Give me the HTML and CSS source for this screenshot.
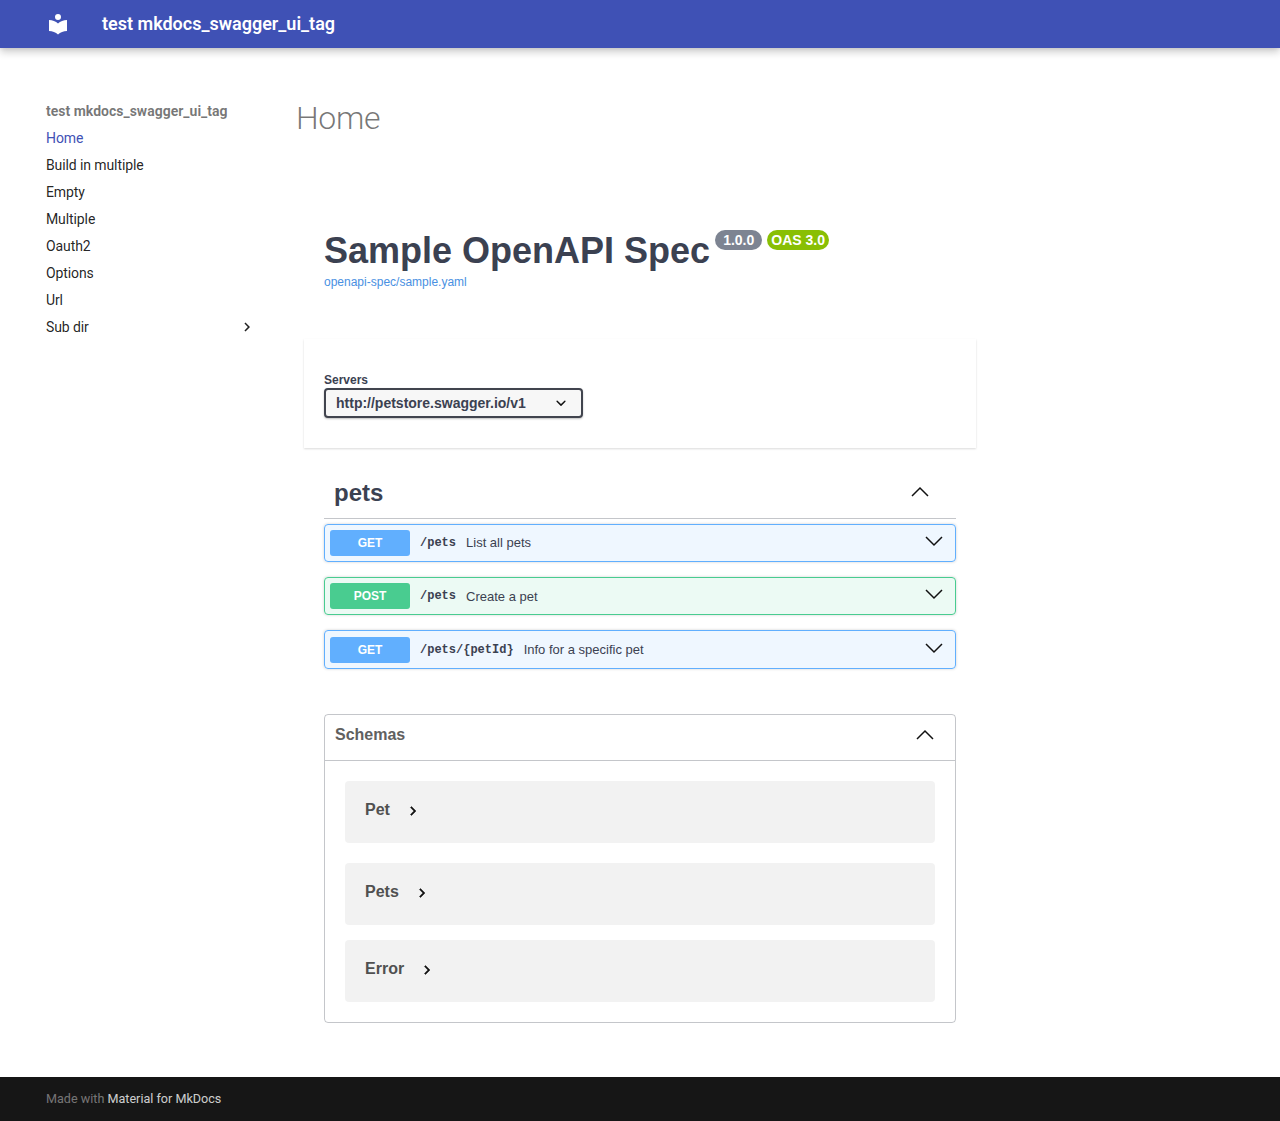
FILE: index.html
```html
<!DOCTYPE html>
<html lang="en">
  <head>
    <meta charset="UTF-8" />
    <meta name="viewport" content="width=device-width, initial-scale=1.0" />
    <title>test mkdocs_swagger_ui_tag</title>
    <link rel="stylesheet" href="styles.css">
  </head>
  <body>
    <header class="topbar">
      <svg class="logo" viewBox="0 0 24 24" width="24" height="24">
        <path d="M12 8a3 3 0 0 0 3-3 3 3 0 0 0-3-3 3 3 0 0 0-3 3 3 3 0 0 0 3 3m0 3.54C9.64 9.35 6.5 8 3 8v11c3.5 0 6.64 1.35 9 3.54 2.36-2.19 5.5-3.54 9-3.54V8c-3.5 0-6.64 1.35-9 3.54Z" />
      </svg>
      <span class="topbar-title">test mkdocs_swagger_ui_tag</span>
    </header>

    <div class="page">
      <nav class="sidebar">
        <div class="sidebar-title">test mkdocs_swagger_ui_tag</div>
        <a class="nav-item active">Home</a>
        <a class="nav-item">Build in multiple</a>
        <a class="nav-item">Empty</a>
        <a class="nav-item">Multiple</a>
        <a class="nav-item">Oauth2</a>
        <a class="nav-item">Options</a>
        <a class="nav-item">Url</a>
        <a class="nav-item nav-parent">
          Sub dir
          <svg viewBox="0 0 24 24" width="18" height="18"><path d="M8.59 16.58 13.17 12 8.59 7.41 10 6l6 6-6 6-1.41-1.42Z" /></svg>
        </a>
      </nav>

      <main class="content">
        <h1 class="page-title">Home</h1>

        <div class="swagger">
          <div class="info">
            <h2 class="api-title">
              Sample OpenAPI Spec
              <span class="badges">
                <span class="badge badge-version">1.0.0</span>
                <span class="badge badge-oas">OAS 3.0</span>
              </span>
            </h2>
            <a class="spec-link">openapi-spec/sample.yaml</a>
          </div>

          <div class="scheme-box">
            <div class="servers-label">Servers</div>
            <div class="server-select">
              http://petstore.swagger.io/v1
              <svg viewBox="0 0 20 20" width="20" height="20"><path d="M13.418 7.859a.695.695 0 0 1 .978 0 .68.68 0 0 1 0 .969l-3.908 3.83a.697.697 0 0 1-.979 0l-3.908-3.83a.68.68 0 0 1 0-.969.695.695 0 0 1 .978 0L10 11l3.418-3.141z" /></svg>
            </div>
          </div>

          <section class="tag-section">
            <div class="tag-head">
              <h3>pets</h3>
              <svg class="arrow" viewBox="0 0 20 20" width="20" height="20"><path d="M2 14 10 6l8 8" /></svg>
            </div>

            <div class="op op-get op-first">
              <span class="method">GET</span>
              <span class="op-path">/pets</span>
              <span class="op-desc">List all pets</span>
              <svg class="arrow" viewBox="0 0 20 20" width="20" height="20"><path d="M2 6l8 8 8-8" /></svg>
            </div>
            <div class="op op-post">
              <span class="method">POST</span>
              <span class="op-path">/pets</span>
              <span class="op-desc">Create a pet</span>
              <svg class="arrow" viewBox="0 0 20 20" width="20" height="20"><path d="M2 6l8 8 8-8" /></svg>
            </div>
            <div class="op op-get op-tall">
              <span class="method">GET</span>
              <span class="op-path">/pets/{petId}</span>
              <span class="op-desc">Info for a specific pet</span>
              <svg class="arrow" viewBox="0 0 20 20" width="20" height="20"><path d="M2 6l8 8 8-8" /></svg>
            </div>
          </section>

          <section class="schemas">
            <div class="schemas-head">
              <h4>Schemas</h4>
              <svg class="arrow" viewBox="0 0 20 20" width="20" height="20"><path d="M2 14 10 6l8 8" /></svg>
            </div>
            <div class="schemas-body">
              <div class="model">Pet <svg viewBox="0 0 24 24" width="18" height="18"><path d="M8.59 16.58 13.17 12 8.59 7.41 10 6l6 6-6 6-1.41-1.42Z" /></svg></div>
              <div class="model model-wide">Pets <svg viewBox="0 0 24 24" width="18" height="18"><path d="M8.59 16.58 13.17 12 8.59 7.41 10 6l6 6-6 6-1.41-1.42Z" /></svg></div>
              <div class="model">Error <svg viewBox="0 0 24 24" width="18" height="18"><path d="M8.59 16.58 13.17 12 8.59 7.41 10 6l6 6-6 6-1.41-1.42Z" /></svg></div>
            </div>
          </section>
        </div>
      </main>
    </div>

    <footer class="footer">
      <span class="footer-text">Made with <a>Material for MkDocs</a></span>
    </footer>
  </body>
</html>
```

FILE: styles.css
```css
* {
  box-sizing: border-box;
}
body {
  margin: 0;
  min-height: 1121px;
  display: flex;
  flex-direction: column;
  font-family: Roboto, sans-serif;
  background-color: #fff;
  color: rgba(0, 0, 0, 0.87);
}

/* top bar */
.topbar {
  height: 48px;
  display: flex;
  align-items: center;
  gap: 32px;
  padding-left: 46px;
  background-color: #3f51b5;
  color: #fff;
  box-shadow: 0 0 4px rgba(0, 0, 0, 0.1), 0 4px 8px rgba(0, 0, 0, 0.2);
}
.logo {
  fill: #fff;
}
.topbar-title {
  margin-top: -2px;
  font-size: 18px;
  font-weight: 600;
}

/* layout */
.page {
  flex: 1;
  display: flex;
}
.sidebar {
  width: 296px;
  flex: none;
  padding: 54px 40px 0 46px;
  font-size: 14px;
}
.sidebar-title {
  height: 18px;
  line-height: 18px;
  margin-bottom: 9px;
  font-weight: 700;
  color: rgba(0, 0, 0, 0.54);
}
.nav-item {
  display: flex;
  justify-content: space-between;
  align-items: center;
  height: 18px;
  line-height: 18px;
  margin-bottom: 9px;
  letter-spacing: -0.1px;
}
.nav-item.active {
  color: #3f51b5;
}
.nav-parent svg {
  fill: rgba(0, 0, 0, 0.87);
}

.content {
  width: 688px;
}
.page-title {
  margin: 50px 0 0;
  height: 40px;
  line-height: 40px;
  font-size: 32px;
  font-weight: 300;
  letter-spacing: -0.32px;
  color: rgba(0, 0, 0, 0.54);
}

/* swagger */
.swagger {
  width: 672px;
  margin-left: 8px;
  font-family: "Liberation Sans", sans-serif;
  color: #3b4151;
}
.info {
  padding: 0 20px;
  margin-top: 92px;
  height: 109px;
}
.api-title {
  margin: 0;
  font-size: 36px;
  line-height: 41px;
  font-weight: 700;
  display: flex;
  align-items: flex-start;
  gap: 5px;
  height: 41px;
}
.badges {
  display: flex;
  gap: 5px;
}
.badge {
  height: 20px;
  padding: 0 4px;
  border-radius: 57px;
  font-size: 14px;
  line-height: 20px;
  color: #fff;
}
.badge-version {
  padding: 0 8px;
  background-color: #7d8492;
}
.badge-oas {
  background-color: #89bf04;
}
.spec-link {
  display: block;
  font-size: 12px;
  line-height: 14px;
  margin-top: 4px;
  color: #4990e2;
}

.scheme-box {
  height: 109px;
  padding: 34px 20px 0;
  background-color: #fff;
  box-shadow: 0 1px 2px rgba(0, 0, 0, 0.15);
}
.servers-label {
  height: 15px;
  font-size: 12px;
  line-height: 15px;
  font-weight: 700;
}
.server-select {
  width: 259px;
  height: 30px;
  display: flex;
  justify-content: space-between;
  align-items: center;
  padding: 0 10px;
  border: 2px solid #41444e;
  border-radius: 4px;
  background-color: #f7f7f7;
  box-shadow: 0 1px 2px rgba(0, 0, 0, 0.25);
  font-size: 14px;
  font-weight: 700;
}
.server-select svg {
  fill: #111;
}

.arrow {
  flex: none;
  fill: none;
  stroke: #111;
  stroke-width: 1.5;
}
.tag-section {
  padding: 0 20px;
  margin-top: 22px;
}
.tag-head {
  height: 49px;
  display: flex;
  justify-content: space-between;
  align-items: center;
  padding: 0 26px 0 10px;
  border-bottom: 1px solid rgba(59, 65, 81, 0.3);
  margin-bottom: 5px;
}
.tag-head h3 {
  margin: 0 0 2px;
  font-size: 24px;
  font-weight: 700;
}
.tag-head .arrow {
  margin-bottom: 5px;
}
.op {
  height: 38px;
  display: flex;
  align-items: center;
  padding: 0 11px 0 5px;
  margin-bottom: 15px;
  border: 1px solid;
  border-radius: 4px;
  box-shadow: 0 0 3px rgba(0, 0, 0, 0.19);
}
.op .arrow {
  margin-bottom: 4px;
}
.op-first .op-desc {
  margin-bottom: 2px;
}
.op-tall {
  height: 39px;
}
.op-get {
  background-color: rgba(97, 175, 254, 0.1);
  border-color: #61affe;
}
.op-post {
  background-color: rgba(73, 204, 144, 0.1);
  border-color: #49cc90;
}
.method {
  width: 80px;
  height: 26px;
  line-height: 26px;
  text-align: center;
  border-radius: 3px;
  font-size: 12px;
  font-weight: 700;
  color: #fff;
}
.op-get .method {
  background-color: #61affe;
}
.op-post .method {
  background-color: #49cc90;
}
.op-path {
  margin-left: 10px;
  font-family: "Liberation Mono", monospace;
  font-size: 12px;
  font-weight: 700;
}
.op-desc {
  flex: 1;
  margin-left: 10px;
  font-size: 13px;
}

.schemas {
  margin: 45px 20px 0;
  border: 1px solid rgba(59, 65, 81, 0.3);
  border-radius: 4px;
}
.schemas-head {
  height: 46px;
  display: flex;
  justify-content: space-between;
  align-items: center;
  padding: 0 20px 0 10px;
  border-bottom: 1px solid rgba(59, 65, 81, 0.3);
}
.schemas-head h4 {
  margin: 0 0 6px;
  font-size: 16px;
  font-weight: 700;
  color: #606060;
}
.schemas-head .arrow {
  margin-bottom: 5px;
}
.schemas-body {
  padding: 20px;
  display: flex;
  flex-direction: column;
  gap: 15px;
}
.model {
  height: 62px;
  display: flex;
  gap: 14px;
  padding: 20px 20px 0;
  line-height: 18px;
  border-radius: 4px;
  background-color: rgba(0, 0, 0, 0.05);
  font-size: 16px;
  font-weight: 700;
  color: #505050;
}
.model-wide {
  margin-top: 5px;
}
.model svg {
  margin-top: 1px;
  fill: #111;
  stroke: #111;
  stroke-width: 0.6;
}

/* footer */
.footer {
  height: 44px;
  display: flex;
  align-items: center;
  padding-left: 46px;
  background-color: #161616;
  font-size: 12.6px;
  color: rgba(255, 255, 255, 0.42);
}
.footer-text {
  margin-top: -2px;
}
.footer a {
  color: rgba(255, 255, 255, 0.8);
}
```
